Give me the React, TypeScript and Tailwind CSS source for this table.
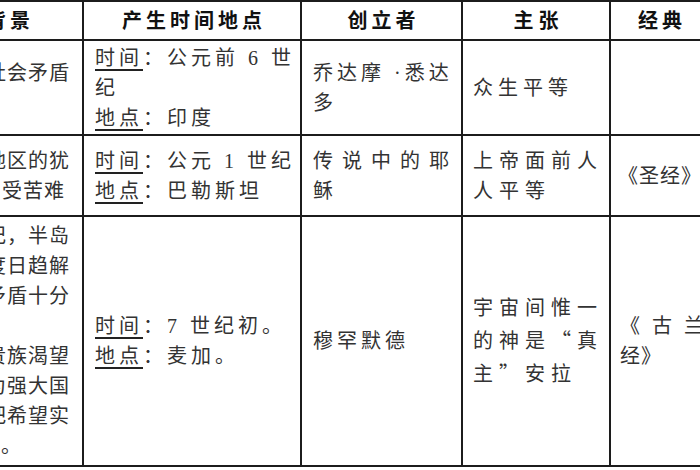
import React from "react";

const line = "border-r-2 border-b-2 border-[#1c1c1c]";

function Label({ children }: { children: React.ReactNode }) {
  return (
    <span className="underline decoration-[1.5px] underline-offset-[4px] decoration-[#222]">
      {children}
    </span>
  );
}

function Side({ lines }: { lines: { t: string; pr?: string; left?: boolean }[] }) {
  return (
    <div className={`${line} flex flex-col justify-center tracking-[1px]`}>
      {lines.map((l, i) => (
        <div
          key={i}
          className={`flex whitespace-nowrap ${l.left ? "justify-start pl-2" : "justify-end"} ${l.pr ?? "pr-[12px]"}`}
        >
          <span>{l.t}</span>
        </div>
      ))}
    </div>
  );
}

export default function App() {
  return (
    <div className="w-[700px] h-[470px] overflow-hidden bg-white font-['Liberation_Serif','Noto_Sans_CJK_SC',serif] text-[20px] leading-[30px] text-[#333]">
      <div className="-ml-[68px] w-[779px] grid grid-cols-[150px_218px_161px_148px_100px] grid-rows-[39px_95px_81px_250px] border-t-2 border-l-2 border-[#1c1c1c]">
        {/* header */}
        <div className={`${line} flex items-center justify-center font-bold text-[#111] tracking-[4px] pl-[4px]`}>背景</div>
        <div className={`${line} flex items-center justify-center font-bold text-[#111] tracking-[4px] pl-[4px]`}>产生时间地点</div>
        <div className={`${line} flex items-center justify-center font-bold text-[#111] tracking-[4px] pl-[4px]`}>创立者</div>
        <div className={`${line} flex items-center justify-center font-bold text-[#111] tracking-[5px] pl-[5px]`}>主张</div>
        <div className={`${line} flex items-center justify-center font-bold text-[#111] tracking-[4px] pl-[4px]`}>经典</div>

        {/* 佛教 */}
        <Side lines={[{ t: "古印度社会矛盾" }, { t: "尖锐。", left: true }]} />
        <div className={`${line} flex flex-col justify-center pl-[11px] tracking-[4px] whitespace-nowrap`}>
          <div><Label>时间</Label>：公元前 6 世</div>
          <div>纪</div>
          <div><Label>地点</Label>：印度</div>
        </div>
        <div className={`${line} flex flex-col justify-center pl-[11px] tracking-[4px] whitespace-nowrap`}>
          <div>乔达摩 ·悉达</div>
          <div>多</div>
        </div>
        <div className={`${line} flex flex-col justify-center pl-[10px] tracking-[5px] whitespace-nowrap`}>
          <div>众生平等</div>
        </div>
        <div className={line}></div>

        {/* 基督教 */}
        <Side lines={[{ t: "巴勒斯坦地区的犹" }, { t: "太人民，受苦难", pr: "pr-[17px]" }]} />
        <div className={`${line} flex flex-col justify-center pl-[11px] tracking-[4px] whitespace-nowrap`}>
          <div><Label>时间</Label>：公元 1 世纪</div>
          <div><Label>地点</Label>：巴勒斯坦</div>
        </div>
        <div className={`${line} flex flex-col justify-center pl-[11px] tracking-[9px] whitespace-nowrap`}>
          <div>传说中的耶</div>
          <div>稣</div>
        </div>
        <div className={`${line} flex flex-col justify-center pl-[10px] tracking-[6px] whitespace-nowrap`}>
          <div>上帝面前人</div>
          <div>人平等</div>
        </div>
        <div className={`${line} flex items-center justify-center tracking-[1px] whitespace-nowrap`}>《圣经》</div>

        {/* 伊斯兰教 */}
        <Side
          lines={[
            { t: "世纪，半岛" },
            { t: "制度日趋解" },
            { t: "社会矛盾十分" },
            { t: "尖锐。", left: true },
            { t: "麦加贵族渴望" },
            { t: "成为强大国" },
            { t: "家，把希望实" },
            { t: "现。", pr: "pr-[60px]" },
          ]}
        />
        <div className={`${line} flex flex-col justify-center pl-[11px] tracking-[4px] whitespace-nowrap`}>
          <div><Label>时间</Label>：7 世纪初。</div>
          <div><Label>地点</Label>：麦加。</div>
        </div>
        <div className={`${line} flex flex-col justify-center pl-[11px] tracking-[4px] whitespace-nowrap`}>
          <div>穆罕默德</div>
        </div>
        <div className={`${line} flex flex-col justify-center pl-[10px] tracking-[6px] leading-[32px] whitespace-nowrap`}>
          <div>宇宙间惟一</div>
          <div>的神是<span className="font-['Noto_Sans_CJK_SC',sans-serif]">“</span>真</div>
          <div>主<span className="font-['Noto_Sans_CJK_SC',sans-serif]">”</span>安拉</div>
        </div>
        <div className={`${line} flex flex-col justify-center pl-[9px] whitespace-nowrap`}>
          <div className="tracking-[12px]">《古兰</div>
          <div className="tracking-[1px]">经》</div>
        </div>
      </div>
    </div>
  );
}
